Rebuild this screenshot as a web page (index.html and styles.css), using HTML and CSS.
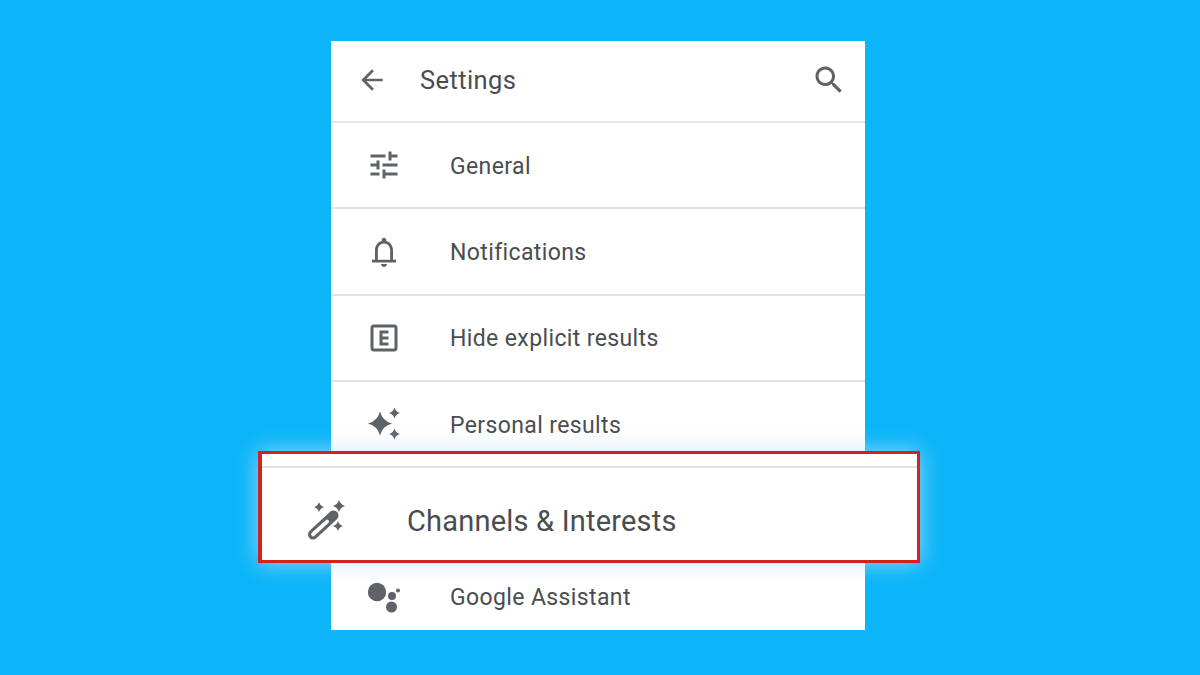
FILE: index.html
```html
<!DOCTYPE html>
<html lang="en">
<head>
<meta charset="utf-8">
<title>Settings</title>
<link rel="stylesheet" href="styles.css">
</head>
<body>
<main class="stage">
  <section class="panel">
    <header class="topbar">
      <svg class="back" viewBox="0 0 24 24"><path d="M20 11H7.83l5.59-5.59L12 4l-8 8 8 8 1.41-1.41L7.83 13H20v-2z"/></svg>
      <h1 class="title">Settings</h1>
      <svg class="search" viewBox="0 0 24 24"><path d="M15.5 14h-.79l-.28-.27C15.41 12.59 16 11.11 16 9.5 16 5.91 13.09 3 9.5 3S3 5.91 3 9.5 5.91 16 9.5 16c1.61 0 3.09-.59 4.23-1.57l.27.28v.79l5 4.99L20.49 19l-4.99-5zm-6 0C7.01 14 5 11.99 5 9.5S7.01 5 9.5 5 14 7.01 14 9.5 11.99 14 9.5 14z"/></svg>
    </header>
    <div class="row">
      <svg class="icon" viewBox="0 0 24 24"><path d="M3 17v2h6v-2H3zM3 5v2h10V5H3zm10 16v-2h8v-2h-8v-2h-2v6h2zM7 9v2H3v2h4v2h2V9H7zm14 4v-2H11v2h10zm-6-4h2V7h4V5h-4V3h-2v6z"/></svg>
      <span class="label">General</span>
    </div>
    <div class="row">
      <svg class="icon" viewBox="0 0 24 24"><path d="M12 22c1.1 0 2-.9 2-2h-4c0 1.1.9 2 2 2zm6-6v-5c0-3.07-1.64-5.64-4.5-6.32V4c0-.83-.67-1.5-1.5-1.5s-1.5.67-1.5 1.5v.68C7.63 5.36 6 7.92 6 11v6.200H4V19h16v-1.800h-2V16zm-1.900 1.200H7.900V11c0-2.500 1.600-4.600 4.100-4.600s4.100 2.100 4.100 4.600v6.200z"/></svg>
      <span class="label">Notifications</span>
    </div>
    <div class="row">
      <svg class="icon" viewBox="0 0 24 24"><path d="M19 3H5c-1.1 0-2 .9-2 2v14c0 1.1.9 2 2 2h14c1.1 0 2-.9 2-2V5c0-1.1-.9-2-2-2zm0 16H5V5h14v14zM15 9V7H9v10h6v-2h-4v-2h4v-2h-4V9h4z"/></svg>
      <span class="label">Hide explicit results</span>
    </div>
    <div class="row">
      <svg class="icon-lg" viewBox="0 0 38 38"><path d="M15 6.500Q17.500 16 27 18.500Q17.500 21 15 30.500Q12.500 21 3 18.500Q12.500 16 15 6.500z"/><path d="M29.500 2.500Q30.800 6.700 35 8Q30.800 9.300 29.500 13.500Q28.200 9.300 24 8Q28.200 6.700 29.500 2.500z"/><path d="M29.500 23.500Q30.800 27.700 35 29Q30.800 30.300 29.500 34.500Q28.200 30.300 24 29Q28.200 27.700 29.500 23.500z"/></svg>
      <span class="label">Personal results</span>
    </div>
    <div class="row row-hidden"></div>
    <div class="row">
      <svg class="icon-lg" viewBox="0 0 38 38"><circle cx="12" cy="14" r="9.200"/><circle cx="27" cy="18" r="4"/><circle cx="26.500" cy="29" r="5.500"/><circle cx="33" cy="12.500" r="2"/></svg>
      <span class="label label-last">Google Assistant</span>
    </div>
  </section>
  <div class="callout">
    <svg class="callout-icon" viewBox="0 0 40 40">
      <line class="wand-body" x1="6" y1="33.500" x2="26.500" y2="14.500"/>
      <line class="wand-hole" x1="6.200" y1="33.300" x2="20" y2="20.600"/>
      <path d="M12 1Q13.200 4.800 17 6Q13.200 7.200 12 11Q10.800 7.200 7 6Q10.800 4.800 12 1z"/>
      <path d="M32 -1Q33.400 3.600 38 5Q33.400 6.400 32 11Q30.600 6.400 26 5Q30.600 3.600 32 -1z"/>
      <path d="M31 20Q32.200 23.800 36 25Q32.200 26.200 31 30Q29.800 26.200 26 25Q29.800 23.800 31 20z"/>
    </svg>
    <span class="callout-label">Channels &amp; Interests</span>
  </div>
</main>
</body>
</html>
```
FILE: styles.css
```css
html, body {
  margin: 0;
  padding: 0;
  height: 100%;
}
body {
  background: #0bb5f8;
  overflow: hidden;
  font-family: Roboto, "Liberation Sans", sans-serif;
}
.stage {
  position: relative;
  width: 1200px;
  height: 675px;
  padding: 41px 0 0 331px;
  box-sizing: border-box;
  display: flex;
}
.panel {
  width: 534px;
  height: 589px;
  background: #fff;
  overflow: hidden;
  flex: none;
}
.topbar {
  height: 77px;
  padding: 0 18px 3px 25px;
  border-bottom: 2px solid #e6e6e6;
  display: flex;
  align-items: center;
}
.back {
  width: 32px;
  height: 32px;
  fill: #5f6368;
  flex: none;
}
.title {
  margin: 0 0 0 32px;
  font-size: 25.5px;
  font-weight: 400;
  letter-spacing: 0.4px;
  color: #4a4d50;
  flex: 1;
}
.search {
  width: 36px;
  height: 36px;
  fill: #5f6368;
  flex: none;
}
.row {
  height: 84.4px;
  border-bottom: 2px solid #e3e3e3;
  display: flex;
  align-items: center;
  padding-left: 35px;
}
.row:last-child {
  border-bottom: 0;
}
.row-hidden {
  visibility: hidden;
}
.icon {
  width: 36px;
  height: 36px;
  fill: #5f6368;
  flex: none;
  margin-right: 48px;
}
.icon-lg {
  width: 38px;
  height: 38px;
  fill: #5f6368;
  flex: none;
  margin: 0 47px 0 -1px;
}
.label {
  font-size: 23px;
  letter-spacing: 0.38px;
  color: #4a4d50;
  margin-top: 2px;
}
.label-last {
  margin-top: 0;
}
.callout {
  position: absolute;
  left: 258px;
  top: 451px;
  width: 662px;
  height: 112px;
  box-sizing: border-box;
  background: #fff;
  border: 3px solid #d3211f;
  border-left-width: 4px;
  box-shadow: 0 0 22px rgba(190, 226, 255, 0.75);
  display: flex;
  align-items: center;
  padding: 27px 0 0 45px;
}
.callout::before {
  content: "";
  position: absolute;
  left: 0;
  right: 0;
  top: 12px;
  height: 2px;
  background: #e3e3e3;
}
.callout-icon {
  width: 40px;
  height: 40px;
  fill: #5f6368;
  flex: none;
  margin-right: 60px;
  overflow: visible;
}
.wand-body {
  stroke: #5f6368;
  stroke-width: 10;
  stroke-linecap: round;
}
.wand-hole {
  stroke: #fff;
  stroke-width: 4;
  stroke-linecap: round;
}
.callout-label {
  font-size: 29px;
  letter-spacing: 0.2px;
  color: #4a4d50;
}
```
